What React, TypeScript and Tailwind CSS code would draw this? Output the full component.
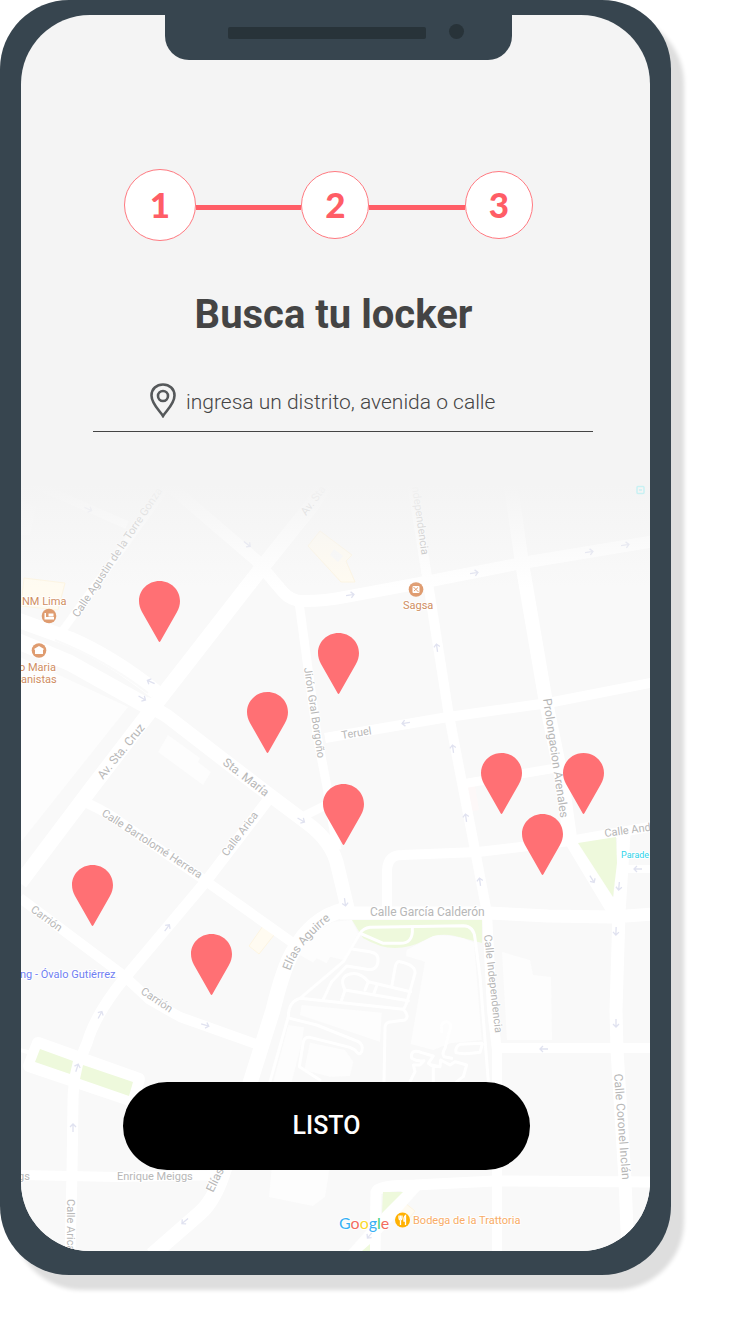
import React from "react";

type Label = { text: string; x: number; y: number; angle?: number; color?: string; size?: number };

const GREY = "#b7b7b7";
const BROWN = "#cf8d61";

const labels: Label[] = [
  { text: "Calle Agustin de la Torre Gonza", x: 78, y: 618, angle: -56.4 },
  { text: "Av. Sta", x: 306, y: 516, angle: -53 },
  { text: "ndependencia", x: 412, y: 487, angle: 82 },
  { text: "Jirón Gral Borgoño", x: 304, y: 668, angle: 81.4 },
  { text: "Prolongacion Arenales", x: 543, y: 699, angle: 81.7, size: 12 },
  { text: "Av. Sta. Cruz", x: 103, y: 780, angle: -51, size: 12 },
  { text: "Sta. María", x: 222, y: 764, angle: 37.5, size: 12 },
  { text: "Calle Arica", x: 227, y: 857, angle: -53 },
  { text: "Calle Bartolomé Herrera", x: 101, y: 815, angle: 33 },
  { text: "Carrión", x: 30, y: 911, angle: 36 },
  { text: "Carrión", x: 140, y: 993, angle: 34 },
  { text: "Teruel", x: 342, y: 739, angle: -9 },
  { text: "Calle García Calderón", x: 370, y: 916, size: 12 },
  { text: "Calle And", x: 605, y: 837, angle: -8 },
  { text: "Calle Independencia", x: 484, y: 935, angle: 83.5 },
  { text: "Calle Coronel Inclán", x: 614, y: 1074, angle: 85.5, size: 12 },
  { text: "Enrique Meiggs", x: 117, y: 1180 },
  { text: "gs", x: 18, y: 1180 },
  { text: "Elías", x: 213, y: 1193, angle: -64, size: 12 },
  { text: "Calle Arica", x: 67, y: 1199, angle: 90 },
  { text: "NM Lima", x: 22, y: 605, color: BROWN },
  { text: "o Maria", x: 19, y: 671, color: BROWN },
  { text: "anistas", x: 21, y: 683, color: BROWN },
  { text: "Sagsa", x: 403, y: 609, color: BROWN },
  { text: "ng - Óvalo Gutiérrez", x: 20, y: 978, color: "#7080f2" },
  { text: "Parade", x: 621, y: 858, color: "#2fd3ea", size: 9 },
  { text: "Bodega de la Trattoria", x: 413, y: 1224, color: "#f8ac66" },
];

const roads: [string, number][] = [
  ["M20 883L90 790L155 705L260 570L312 505L335 470", 15],
  ["M163 480L207 518L256 560L283 592Q292 602 305 601Q325 601 345 597L415 584L522 563L655 541", 12],
  ["M20 478L127 525", 8],
  ["M63 630L173 478", 8],
  ["M15 619L70 639Q112 657 156 692", 15],
  ["M15 640L70 663L145 705", 16],
  ["M145 703L167 716L220 757L267 793L307 823Q333 842 338 868L348 910", 14],
  ["M299 602L317 735L327 787L337 850", 9],
  ["M300 818L330 803", 9],
  ["M410 470L428 583L448 710L462 783L475 850L487 913L492 1010L497 1050L497 1255", 10],
  ["M510 480L522 563L545 697L562 780L570 838L615 913", 14],
  ["M655 682L548 703L448 717L325 738", 10],
  ["M462 784L556 768", 9],
  ["M655 826L570 841L478 852L402 855Q388 855 387 870L387 912", 10],
  ["M340 913L488 913L548 916L612 917L655 914", 13],
  ["M624 834L619 913L616 1010L617 1050L625 1180L628 1255", 13],
  ["M622 869L655 869", 8],
  ["M268 800L207 880L123 980Q95 1015 87 1043Q73 1075 73 1100L72 1173L70 1255", 11],
  ["M87 803Q110 814 120 822L200 877L293 943", 10],
  ["M20 898L123 975L150 1000L180 1017L256 1044", 10],
  ["M343 910Q312 918 294 950Q284 965 273 1010L250 1083L225 1167Q215 1200 200 1213L152 1255", 15],
  ["M15 1175L117 1177L222 1175", 10],
  ["M20 1050L35 1054", 4],
  ["M497 1048L655 1048", 10],
  ["M655 1182L495 1181L415 1185Q378 1185 376 1192L375 1255", 11],
  ["M415 1186L353 1255", 13],
];

const arrows: [number, number, number][] = [
  [350, 595, -8], [474, 573, -8], [589, 552, -8], [625, 545, -8], [247, 544, 38],
  [88, 509, 25], [151, 682, 205], [142, 698, 30], [301, 820, 30], [167, 928, -54],
  [406, 723, 172], [437, 648, -98], [453, 749, -98], [466, 818, -98], [480, 882, -98],
  [592, 879, 58], [619, 886, 95], [616, 931, 92], [638, 869, 180], [345, 902, 82],
  [205, 1025, 18], [100, 1015, -62], [77, 1068, -72], [73, 1128, -90], [185, 1221, 140],
  [616, 1023, 90], [544, 1049, 180], [370, 1235, 130],
];

const pins: [number, number][] = [
  [139, 581], [318, 633], [247, 692], [323, 784], [481, 753],
  [563, 753], [522, 814], [72, 865], [191, 934],
];

function MapArt() {
  return (
    <svg viewBox="21 470 629 781" className="block h-auto w-full font-[Roboto,sans-serif]">
      <defs>
        <linearGradient id="fade" x1="0" y1="0" x2="0" y2="1">
          <stop offset="0" stopColor="#f4f4f4" />
          <stop offset="0.12" stopColor="#f4f4f4" />
          <stop offset="1" stopColor="#f4f4f4" stopOpacity="0" />
        </linearGradient>
        <path id="aguirre" d="M290 971Q299 943 334 917" />
      </defs>
      <rect x="21" y="470" width="629" height="781" fill="#f9f9f9" />

      <g fill="#fdfdfd">
        <path d="M20 657L128 707L20 843Z" />
        <path d="M168 735L200 758L198 762L211 772L203 785L158 752Z" />
        <path d="M502 952L530 960L533 975L551 977L552 1040L507 1040Z" />
        <path d="M272 1165H330L325 1197L313 1206L269 1197Z" />
        <path d="M20 500L36 507L30 535H20Z" opacity="0.5" />
      </g>
      <path d="M467 787L475 785L479 810L469 812Z" fill="#fdf8f8" />
      <g fill="#fffbf1" stroke="#fdf5e2">
        <path d="M24 578L65 583L58 610L21 606Z" />
        <path d="M320 531L352 555L346 561L355 582H341L308 546Z" />
        <path d="M263 926L274 935L259 954L249 946Z" />
        <path d="M405 1203L415 1211L407 1221L397 1213Z" />
      </g>
      <path d="M334 549L343 556L338 562L330 555Z" fill="#f8f8f8" />

      <path d="M38 1043L139 1079L133 1101L29 1066Z" fill="#fff" stroke="#fff" strokeWidth="12" strokeLinejoin="round" />
      <g fill="none" stroke="#fff" strokeLinejoin="round">
        {roads.map(([d, width]) => (
          <path key={d} d={d} strokeWidth={width} />
        ))}
      </g>
      <path d="M55 640Q105 660 148 693" fill="none" stroke="#fafafa" strokeWidth="2" />

      <g fill="#eef9dc">
        <path d="M578 843L616 837L617 863L613 897Z" />
        <path d="M352 920H482V943L455 936Q438 932 425 940Q410 948 395 948Q380 948 363 938Z" />
        <path d="M40 1049L73 1061L70 1074L35 1062Z" />
        <path d="M83 1065L133 1082L129 1096L80 1079Z" />
        <path d="M383 1192H403L382 1213Z" />
        <path d="M370 1244V1251H362Z" />
      </g>

      <g transform="translate(250 910) scale(0.33333)">
        <g fill="#fdfdfd">
          <path d="M250 35L305 30L325 70L280 150L240 140L230 160L200 145L190 158L150 135L165 85Z" />
          <path d="M470 120L550 78Q580 72 640 85L672 98L695 390L600 400L550 420L482 402L525 155L468 138Z" />
          <path d="M155 285L395 308L390 395L150 315Z" />
          <path d="M115 345L162 352L155 400L125 515H70Z" />
          <path d="M180 398L285 420L310 455L300 498L240 500L163 480Z" />
        </g>
        <g fill="none" stroke="#fff" strokeWidth="9" strokeLinejoin="round" strokeLinecap="round">
          <path d="M60 515L115 320Q115 275 150 265L280 155L330 70Q340 55 360 52L640 47Q672 48 675 85L690 200L715 515" />
          <path d="M335 72L400 100H450Q490 100 487 55" />
          <path d="M310 118L360 125Q390 130 383 160Q378 182 350 178L290 168L245 215L220 268" />
          <path d="M150 265L460 298Q470 285 478 250L495 190Q498 165 450 155Q438 152 435 175L425 230" />
          <path d="M275 270L285 240Q265 200 300 192Q330 185 355 215L482 245M285 240L475 272M355 215L345 240M380 228L372 250" />
          <path d="M460 298Q480 320 465 330L415 337Q405 340 405 355L402 515" />
          <path d="M120 325L200 345L325 395Q342 405 335 425Q328 440 315 420L300 412L180 382Q165 380 160 395L148 470L210 510" />
          <path d="M575 365Q570 335 590 335Q608 340 598 365L585 415Q575 430 582 440L605 445M695 400L630 403Q615 410 618 428Q640 435 690 427L697 402" />
          <path d="M550 515V470L535 460L550 438L515 428Q480 415 485 445Q500 455 522 452L510 465H490L495 485L480 515M545 465L570 470L572 450L600 465L615 455L650 465L640 500L620 515" />
        </g>
      </g>

      <g fill="none" stroke="#e0e2f0" strokeWidth="1.3">
        {arrows.map(([x, y, angle]) => (
          <path key={`${x}-${y}`} transform={`translate(${x} ${y}) rotate(${angle})`} d="M-4 0H4M1 -3L4 0L1 3" />
        ))}
      </g>

      <g paintOrder="stroke" stroke="#fff" strokeWidth="2" strokeLinejoin="round">
        {labels.map((l) => (
          <text
            key={`${l.text}-${l.x}`}
            fontSize={l.size ?? 11}
            fill={l.color ?? GREY}
            transform={`translate(${l.x} ${l.y}) rotate(${l.angle ?? 0})`}
          >
            {l.text}
          </text>
        ))}
        <text fontSize="12" fill={GREY}>
          <textPath href="#aguirre">Elías Aguirre</textPath>
        </text>
        <text x="339" y="1229" fontSize="16" className="font-[Lato,sans-serif]">
          <tspan fill="#38b0f5">G</tspan>
          <tspan fill="#f36c60">o</tspan>
          <tspan fill="#fbd72b">o</tspan>
          <tspan fill="#38b0f5">g</tspan>
          <tspan fill="#3fcf80">l</tspan>
          <tspan fill="#f36c60">e</tspan>
        </text>
      </g>

      <g fill="#df9c70">
        <circle cx="49" cy="616" r="7.3" />
        <circle cx="39" cy="650.500" r="7.3" />
        <circle cx="416" cy="589.500" r="7.3" />
      </g>
      <path d="M44.500 619.500V613H46V617H54V619.500ZM48.500 613.500H53.500V616.500H48.500Z" fill="#fff" />
      <path d="M34 649L39 646L44 649L43 650V654H35V650Z" fill="#fff" />
      <rect x="412.500" y="586" width="7" height="7" rx="1" fill="#fff" />
      <path d="M413.500 587L418.500 592M414 591L418 587.500" stroke="#df9c70" />
      <circle cx="402.500" cy="1220" r="7.500" fill="#ffb102" />
      <path d="M399 1215.500V1218Q399 1220 400.500 1220V1225M400.500 1215.500V1219M402 1215.500V1218Q402 1220 400.500 1220M405.500 1225V1215.500Q403.500 1217 404 1221H405.500" fill="none" stroke="#fff" strokeWidth="1.3" />

      <rect x="21" y="470" width="629" height="118" fill="url(#fade)" />
      <g fill="none" stroke="#c9f1f3" strokeWidth="1.500">
        <rect x="637" y="486.500" width="7" height="7" rx="1" />
        <path d="M639 490H642" />
      </g>

      <g fill="#ff7074">
        {pins.map(([x, y]) => (
          <path
            key={`${x}-${y}`}
            transform={`translate(${x} ${y})`}
            d="M20.500 0C32 0 41 9 41 20C41 24 40 27 38 31L21.500 60Q20.500 62 19.500 60L3 31C1 27 0 24 0 20C0 9 9 0 20.500 0Z"
          />
        ))}
      </g>
    </svg>
  );
}

function Connector({ className }: { className: string }) {
  return <span aria-hidden="true" className={`mt-1 h-[5px] bg-[#ff5d66] ${className}`} />;
}

function Step({ value, className }: { value: number; className: string }) {
  return (
    <span
      className={`flex shrink-0 items-center justify-center rounded-full border border-[#ff7980] bg-white pb-0.5 font-[Lato,sans-serif] text-[35px] font-black text-[#ff5d66] ${className}`}
    >
      {value}
    </span>
  );
}

export default function App() {
  return (
    <main className="min-h-screen bg-white pr-[58px] pb-[69px] font-[Roboto,sans-serif]">
      <div className="rounded-[69px] bg-[#37454f] px-[21px] pt-[15px] pb-6 shadow-[13px_15px_4px_#dedede]">
        <div className="overflow-hidden rounded-[69px] bg-[#f4f4f4]">
          <div className="ml-36 flex h-[45px] w-[347px] items-start gap-[23px] rounded-b-3xl bg-[#37454f] pt-2 pl-[63px]">
            <span className="mt-1 h-3 w-[198px] rounded-xs bg-[#283339]" />
            <span className="mt-px size-[15px] rounded-full bg-[#283339]" />
          </div>

          <div className="mt-[109px] flex items-center pr-[117px] pl-[103px]">
            <Step value={1} className="size-[72px]" />
            <Connector className="flex-[11]" />
            <Step value={2} className="size-[68px]" />
            <Connector className="flex-[10]" />
            <Step value={3} className="size-[68px]" />
          </div>

          <h1 className="mt-[50px] pr-1 text-center text-[40px] leading-12 font-bold text-[#444]">Busca tu locker</h1>

          <label className="mt-[39px] mr-[57px] ml-[72px] flex h-[54px] items-center gap-2.5 border-b border-[#444] pb-2 pl-[57px]">
            <svg viewBox="0 0 26 35" className="h-[35px] w-[26px] shrink-0" fill="none" stroke="#55585a">
              <path d="M13 33C10 28 1.500 21 1.500 12.500C1.500 6 6.500 1.500 13 1.500S24.500 6 24.500 12.500C24.500 21 16 28 13 33Z" strokeWidth="2.600" />
              <circle cx="13" cy="13" r="5" strokeWidth="2.600" />
            </svg>
            <input
              type="text"
              placeholder="ingresa un distrito, avenida o calle"
              className="w-full min-w-0 bg-transparent pt-0.5 text-[21px] leading-8 font-light text-[#444] outline-none placeholder:text-[#444]"
            />
          </label>

          <div className="relative mt-[38px]">
            <MapArt />
            <div className="absolute inset-x-0 bottom-[81px] pr-[120px] pl-[102px]">
              <button type="button" className="h-22 w-full rounded-full bg-black text-[25px] font-medium text-white">
                LISTO
              </button>
            </div>
          </div>
        </div>
      </div>
    </main>
  );
}
